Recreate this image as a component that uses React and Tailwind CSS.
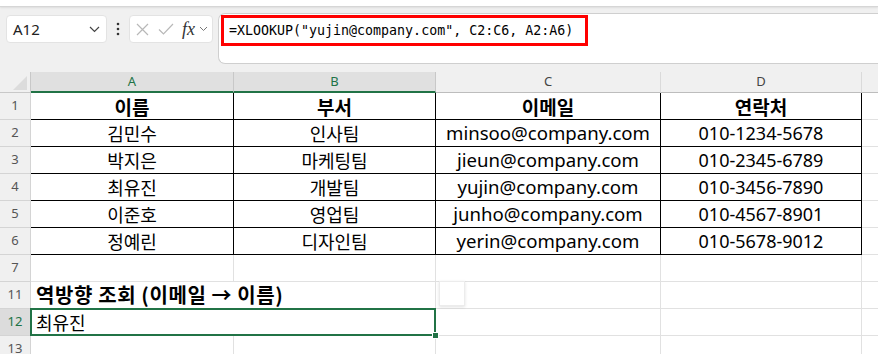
import React from "react";

const F = "font-['Noto_Sans','Noto_Sans_CJK_KR',sans-serif]";
const K = "font-['Noto_Sans_CJK_KR','Noto_Sans',sans-serif]";

const data = [
  ["김민수", "인사팀", "minsoo@company.com", "010-1234-5678"],
  ["박지은", "마케팅팀", "jieun@company.com", "010-2345-6789"],
  ["최유진", "개발팀", "yujin@company.com", "010-3456-7890"],
  ["이준호", "영업팀", "junho@company.com", "010-4567-8901"],
  ["정예린", "디자인팀", "yerin@company.com", "010-5678-9012"],
];

const widths = ["w-[203px]", "w-[202px]", "w-[225px]", "w-[201px]"];

function RowHead({ n, sel }) {
  return (
    <div
      className={`w-[31px] shrink-0 h-full border-r border-b border-[#d4d4d4] flex items-center justify-center text-[13px] ${F} ${
        sel ? "bg-[#dcdcdc] text-[#217346]" : "bg-[#f0f0f0] text-[#555]"
      }`}
    >
      {n}
    </div>
  );
}

function TableRow({ n, cells, header }) {
  return (
    <div className="flex h-[27px]">
      <RowHead n={n} />
      {cells.map((c, i) => (
        <div
          key={i}
          className={`${widths[i]} shrink-0 h-full border-r border-b border-black bg-white flex items-center justify-center whitespace-nowrap leading-none text-black ${
            header
              ? `${K} font-bold text-[19px]`
              : i === 2
              ? `${F} text-[18.6px]`
              : i === 3
              ? `${F} text-[18px]`
              : `${K} text-[18px]`
          }`}
        >
          {c}
        </div>
      ))}
      <div className="flex-1 h-full border-b border-[#e1e1e1] bg-white" />
    </div>
  );
}

function EmptyRow({ n }) {
  return (
    <div className="flex h-[27px]">
      <RowHead n={n} />
      {widths.map((w, i) => (
        <div key={i} className={`${w} shrink-0 h-full border-r border-b border-[#e1e1e1] bg-white`} />
      ))}
      <div className="flex-1 h-full border-b border-[#e1e1e1] bg-white" />
    </div>
  );
}

export default function App() {
  return (
    <div className={`w-[878px] h-[354px] overflow-hidden bg-[#f0f0f0] ${F}`}>
      {/* ribbon edge */}
      <div className="h-[7px] bg-white border-b border-[#d6d6d6] shadow-[0_1px_2px_rgba(0,0,0,0.08)]" />

      {/* formula bar */}
      <div className="h-[57px] flex items-start">
        <div className="ml-[6px] mt-[8px] w-[101px] h-[28px] bg-white rounded-[4px] border border-[#e3e3e3] flex items-center justify-between pl-[6px] pr-[6px]">
          <span className="text-[15px] text-[#222]">A12</span>
          <svg width="11" height="7" viewBox="0 0 11 7" fill="none">
            <path d="M1 1l4.5 4.5L10 1" stroke="#444" strokeWidth="1.2" />
          </svg>
        </div>
        <div className="w-[22px] h-[28px] mt-[8px] flex items-center justify-center">
          <svg width="4" height="14" viewBox="0 0 4 14">
            <circle cx="2" cy="2" r="1.3" fill="#333" />
            <circle cx="2" cy="7" r="1.3" fill="#333" />
            <circle cx="2" cy="12" r="1.3" fill="#333" />
          </svg>
        </div>
        <div className="mt-[8px] w-[84px] h-[28px] bg-white rounded-[4px] border border-[#e3e3e3] flex items-center pl-[6px]">
          <svg width="13" height="13" viewBox="0 0 13 13" fill="none">
            <path d="M1 1l11 11M12 1L1 12" stroke="#b8b8b8" strokeWidth="1.2" />
          </svg>
          <svg className="ml-[9px]" width="16" height="12" viewBox="0 0 16 12" fill="none">
            <path d="M1 6.5l4.5 4.5L15 1" stroke="#b8b8b8" strokeWidth="1.2" />
          </svg>
          <span className="ml-[8px] font-['Liberation_Serif',serif] italic text-[18px] text-[#333] leading-none">
            fx
          </span>
          <svg className="ml-[4px]" width="9" height="6" viewBox="0 0 9 6" fill="none">
            <path d="M1 1l3.5 3.5L8 1" stroke="#777" strokeWidth="1" />
          </svg>
        </div>
        <div className="ml-[5px] mt-[6px] flex-1 h-[51px] bg-white rounded-l-[7px] border border-r-0 border-[#cfcfcf] pl-[2px] pt-px">
          <div className="w-[367px] h-[31px] border-[3px] border-[#ff0000] flex items-center pl-[5px]">
            <span className="font-['DejaVu_Sans_Mono',monospace] text-[13.3px] text-black whitespace-nowrap">
              =XLOOKUP("yujin@company.com", C2:C6, A2:A6)
            </span>
          </div>
        </div>
      </div>

      {/* gap */}
      <div className="h-[8px]" />

      {/* column headers */}
      <div className="flex h-[21px]">
        <div className="w-[31px] shrink-0 h-full border-r border-b border-[#c8c8c8] bg-[#f0f0f0] flex items-end justify-end pr-[3px] pb-[2px]">
          <svg width="14" height="14" viewBox="0 0 14 14">
            <path d="M14 0L14 14L0 14Z" fill="#dcdcdc" />
          </svg>
        </div>
        {["A", "B"].map((l, i) => (
          <div
            key={l}
            className={`${widths[i]} shrink-0 h-full bg-[#e0e0e0] border-r border-[#c8c8c8] border-b-2 border-b-[#217346] flex items-center justify-center text-[13px] text-[#217346]`}
          >
            {l}
          </div>
        ))}
        {["C", "D"].map((l, i) => (
          <div
            key={l}
            className={`${widths[i + 2]} shrink-0 h-full bg-[#f0f0f0] border-r border-[#dadada] border-b border-b-[#bdbdbd] flex items-center justify-center text-[13px] text-[#444]`}
          >
            {l}
          </div>
        ))}
        <div className="flex-1 h-full bg-[#f0f0f0] border-b border-[#bdbdbd]" />
      </div>

      {/* grid */}
      <TableRow n={1} cells={["이름", "부서", "이메일", "연락처"]} header />
      {data.map((r, i) => (
        <TableRow key={i} n={i + 2} cells={r} />
      ))}
      <EmptyRow n={7} />

      {/* row 11 */}
      <div className="flex h-[27px]">
        <RowHead n={11} />
        <div className={`w-[405px] shrink-0 h-full border-r border-b border-[#e1e1e1] bg-white flex items-center pl-[5px] whitespace-nowrap ${K} font-bold text-[20px] tracking-[0.6px] leading-none text-black`}>
          역방향 조회 (이메일 → 이름)
        </div>
        <div className="w-[225px] shrink-0 h-full border-r border-b border-[#e1e1e1] bg-white relative">
          <div className="absolute left-[3px] -top-[1px] w-[26px] h-[25px] bg-white border border-[#ececec] shadow-[0_1px_3px_rgba(0,0,0,0.12)]" />
        </div>
        <div className="w-[201px] shrink-0 h-full border-r border-b border-[#e1e1e1] bg-white" />
        <div className="flex-1 h-full border-b border-[#e1e1e1] bg-white" />
      </div>

      {/* row 12 */}
      <div className="flex h-[27px]">
        <RowHead n={12} sel />
        <div className={`w-[405px] shrink-0 h-full border-r border-b border-[#e1e1e1] bg-white relative flex items-center pl-[5px] ${K} text-[18px] leading-none text-black`}>
          최유진
          <div className="absolute -top-px -left-px -right-px -bottom-px border-2 border-[#217346]" />
          <div className="absolute -right-[4px] -bottom-[4px] w-[7px] h-[7px] bg-[#217346] border border-white" />
        </div>
        <div className="w-[225px] shrink-0 h-full border-r border-b border-[#e1e1e1] bg-white" />
        <div className="w-[201px] shrink-0 h-full border-r border-b border-[#e1e1e1] bg-white" />
        <div className="flex-1 h-full border-b border-[#e1e1e1] bg-white" />
      </div>

      <EmptyRow n={13} />
    </div>
  );
}
